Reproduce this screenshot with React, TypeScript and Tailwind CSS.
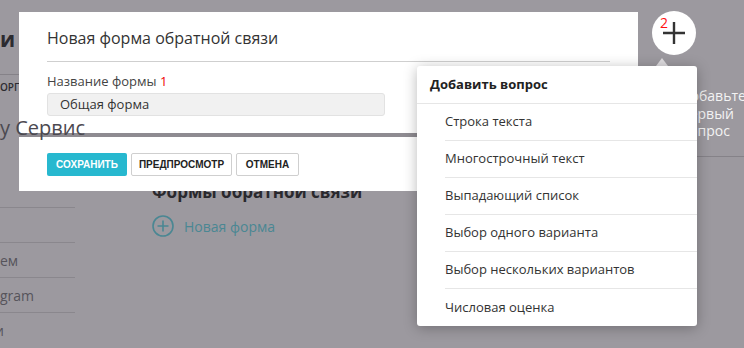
import React from "react";

const questionTypes = [
  "Строка текста",
  "Многострочный текст",
  "Выпадающий список",
  "Выбор одного варианта",
  "Выбор нескольких вариантов",
  "Числовая оценка",
];

const sans = { fontFamily: '"Open Sans", "Noto Sans", sans-serif' };

export default function App() {
  return (
    <div
      className="relative h-[348px] w-[744px] overflow-hidden bg-[#9c999f]"
      style={sans}
    >
      {/* page under the overlay */}
      <div className="flex h-full">
        <div className="w-[75px] shrink-0">
          <div className="pt-[26px] text-[21px] font-bold leading-[26px] text-[#2c2b30]">и</div>
          <div className="mt-[22px] border-t border-[#858288]" />
          <div className="mt-[6px] text-[10px] font-semibold leading-[12px] text-[#2c2b30]">ОРГАН</div>
          <div className="mt-[114px] h-[36px] border-y border-[#8a878d]" />
          <div className="flex h-[35px] items-center border-b border-[#8a878d] text-[14px] text-[#56545b]">ем</div>
          <div className="flex h-[35px] items-center border-b border-[#8a878d] text-[14px] text-[#56545b]">gram</div>
          <div className="flex h-[35px] items-center text-[14px] text-[#56545b]">
            <span className="-ml-[5px]">и</span>
          </div>
        </div>
        <div className="pl-[77px] pt-[181px]">
          <div className="text-[17px] font-bold leading-[22px] text-[#2a292e]">Формы обратной связи</div>
          <div className="mt-[12px] flex items-center gap-[10px] text-[14px] text-[#4a8793]">
            <svg width="22" height="22" viewBox="0 0 22 22" fill="none" stroke="#4a8793" strokeWidth="1.6">
              <circle cx="11" cy="11" r="10" />
              <path d="M11 5.5v11M5.5 11h11" />
            </svg>
            <span>Новая форма</span>
          </div>
        </div>
      </div>

      {/* modal */}
      <div className="absolute left-[19px] top-[12px] flex w-[619px] flex-col">
        <div className="h-[121px] bg-white px-[28px]">
          <div className="pt-[14px] text-[16px] leading-[24px] text-[#333]">Новая форма обратной связи</div>
          <div className="mt-[11px] w-[563px] border-t border-[#cfcfcf]" />
          <div className="mt-[11px] text-[13px] leading-[16px] text-[#444]">
            Название формы <span className="text-[#f00000]">1</span>
          </div>
          <div className="mt-[4px] flex h-[23px] w-[338px] items-center rounded-[3px] border border-[#e2e2e2] bg-[#f1f1f1] pl-[12px] text-[13px] text-[#333]">
            Общая форма
          </div>
        </div>
        <div className="h-[4px] bg-[#8e8b91]" />
        <div
          className="flex h-[54px] gap-[4px] bg-white px-[28px] pt-[16px]"
          style={{ fontFamily: '"Liberation Sans", Arial, sans-serif' }}
        >
          <div className="flex h-[23px] w-[80px] items-center justify-center rounded-[2px] bg-[#27b8cf] text-[10px] font-bold text-white">
            СОХРАНИТЬ
          </div>
          <div className="flex h-[23px] w-[101px] items-center justify-center rounded-[2px] border border-[#cfcfcf] bg-white text-[10px] font-bold text-[#222]">
            ПРЕДПРОСМОТР
          </div>
          <div className="flex h-[23px] w-[63px] items-center justify-center rounded-[2px] border border-[#cfcfcf] bg-white text-[10px] font-bold text-[#222]">
            ОТМЕНА
          </div>
        </div>
      </div>

      {/* page heading seen over the modal */}
      <div className="absolute left-0 top-[115px] text-[20px] leading-[26px] text-[#4b4950]">у Сервис</div>

      {/* add question button */}
      <div className="absolute left-[652px] top-[11px] flex h-[44px] w-[44px] items-center justify-center rounded-full bg-white">
        <svg width="24" height="24" viewBox="0 0 24 24" stroke="#333" strokeWidth="2.4">
          <path d="M12 1v22M1 12h22" />
        </svg>
        <span className="absolute left-[8px] top-[5px] text-[14px] leading-[14px] text-[#ff1010]">2</span>
      </div>

      {/* tooltip */}
      <div className="absolute left-[656px] top-[58px] h-0 w-0 border-x-[6px] border-b-[8px] border-x-transparent border-b-[#dedcdf]" />
      <div className="absolute left-[681px] top-[87px] h-[70px] w-[80px] border-b border-[#858288] text-[14px] leading-[17.5px] text-[#f3f3f3]">
        Добавьте
        <br />
        первый
        <br />
        вопрос
      </div>

      {/* question type menu */}
      <div className="absolute left-[417px] top-[66px] w-[280px] rounded-[3px] bg-white shadow-[0_2px_14px_rgba(0,0,0,0.28)]">
        <div className="flex h-[38px] items-center border-b border-[#e6e6e6] pl-[13px] text-[13px] font-bold text-[#222]">
          Добавить вопрос
        </div>
        {questionTypes.map((t, i) => (
          <div key={t} className="ml-[28px]">
            <div
              className={
                i < questionTypes.length - 1
                  ? "flex h-[37px] items-center border-b border-[#e6e6e6] text-[13px] text-[#333]"
                  : "flex h-[37px] items-center text-[13px] text-[#333]"
              }
            >
              {t}
            </div>
          </div>
        ))}
      </div>
    </div>
  );
}
